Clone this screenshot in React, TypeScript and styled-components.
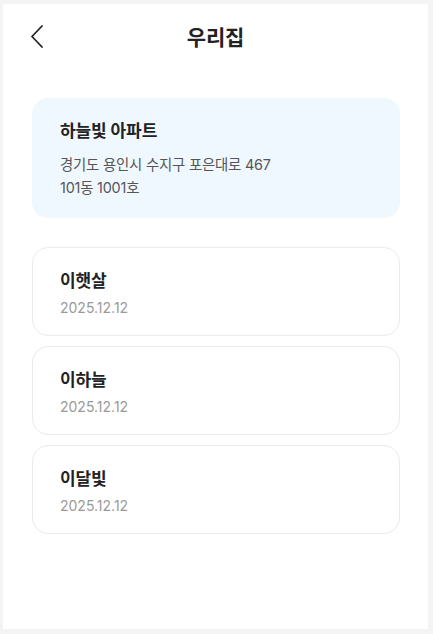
import React from "react";
import styled, { createGlobalStyle } from "styled-components";

const Global = createGlobalStyle`
  html, body { margin: 0; padding: 0; background: #f4f4f4; }
  body { font-family: "Inter", "Noto Sans CJK KR", "Noto Sans", sans-serif; }
  * { box-sizing: border-box; }
`;

const Panel = styled.div`
  margin: 4px 5px 0 3px;
  width: 425px;
  height: 625px;
  background: #ffffff;
  display: flex;
  flex-direction: column;
`;

const Header = styled.header`
  position: relative;
  height: 68px;
  display: flex;
  align-items: center;
  justify-content: center;
  padding-bottom: 5px;
`;

const BackButton = styled.button`
  position: absolute;
  left: 21px;
  top: 18px;
  width: 26px;
  height: 28px;
  padding: 0;
  border: none;
  background: transparent;
  display: flex;
  align-items: center;
  justify-content: center;
`;

const Title = styled.h1`
  margin: 0;
  font-size: 21px;
  font-weight: 700;
  color: #222;
  letter-spacing: -0.1px;
`;

const Content = styled.main`
  padding: 26px 28px 0 29px;
  display: flex;
  flex-direction: column;
`;

const HomeCard = styled.section`
  height: 120px;
  border-radius: 16px;
  background: #f0f8ff;
  padding: 20px 28px;
  margin-bottom: 29px;
`;

const HomeName = styled.div`
  font-size: 17px;
  font-weight: 700;
  color: #222;
  line-height: 27px;
  letter-spacing: -0.1px;
`;

const Address = styled.div`
  margin-top: 8px;
  font-size: 14.4px;
  color: #555;
  line-height: 23px;
  letter-spacing: -0.2px;
`;

const List = styled.div`
  display: flex;
  flex-direction: column;
  gap: 10px;
`;

const MemberCard = styled.div`
  height: 89px;
  border: 1px solid #ebebeb;
  border-radius: 16px;
  padding: 21px 27px;
  background: #fff;
`;

const MemberName = styled.div`
  font-size: 17px;
  font-weight: 700;
  color: #222;
  line-height: 24px;
  letter-spacing: -0.1px;
`;

const MemberDate = styled.div`
  margin-top: 5px;
  font-size: 14px;
  color: #9a9a9a;
  line-height: 20px;
  letter-spacing: 0;
`;

const members = [
  { name: "이햇살", date: "2025.12.12" },
  { name: "이하늘", date: "2025.12.12" },
  { name: "이달빛", date: "2025.12.12" },
];

export default function App() {
  return (
    <>
      <Global />
      <Panel>
        <Header>
          <BackButton aria-label="뒤로">
            <svg width="14" height="24" viewBox="0 0 14 24" fill="none">
              <path d="M12 2 L2 12.5 L12 23" stroke="#222" strokeWidth="1.8" strokeLinecap="round" strokeLinejoin="round" />
            </svg>
          </BackButton>
          <Title>우리집</Title>
        </Header>
        <Content>
          <HomeCard>
            <HomeName>하늘빛 아파트</HomeName>
            <Address>
              경기도 용인시 수지구 포은대로 467
              <br />
              101동 1001호
            </Address>
          </HomeCard>
          <List>
            {members.map((m) => (
              <MemberCard key={m.name}>
                <MemberName>{m.name}</MemberName>
                <MemberDate>{m.date}</MemberDate>
              </MemberCard>
            ))}
          </List>
        </Content>
      </Panel>
    </>
  );
}
